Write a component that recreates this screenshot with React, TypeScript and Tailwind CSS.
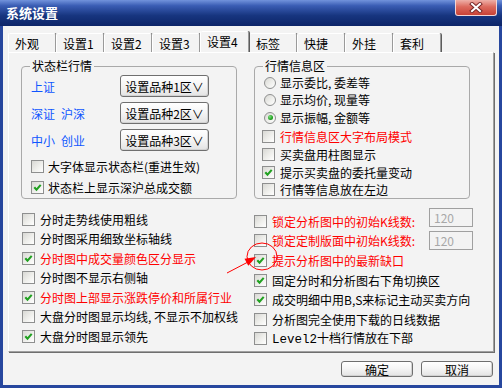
import React from "react";

function Box({ checked }: { checked?: boolean }) {
  return (
    <span className="flex h-[13px] w-[13px] shrink-0 items-center justify-center border border-[#8e8f8f] bg-[linear-gradient(135deg,#d8d8d4_0%,#efefec_55%,#ffffff_100%)]">
      {checked && (
        <svg width="11" height="11" viewBox="0 0 11 11">
          <path d="M2.3 5.2 L4.5 7.6 L8.7 2.9" fill="none" stroke="#21a121" strokeWidth="2.1" />
        </svg>
      )}
    </span>
  );
}

function CheckRow({
  checked,
  label,
  red,
  className = "",
  gap = "gap-[5px]",
}: {
  checked?: boolean;
  label: React.ReactNode;
  red?: boolean;
  className?: string;
  gap?: string;
}) {
  return (
    <div className={`flex h-[13px] items-center ${gap} ${className}`}>
      <Box checked={checked} />
      <span className={`whitespace-pre text-[12px] leading-[13px] ${red ? "text-[#ff0000]" : "text-black"}`}>{label}</span>
    </div>
  );
}

function Radio({ checked, label, className = "" }: { checked?: boolean; label: string; className?: string }) {
  return (
    <div className={`flex h-[13px] items-center gap-[4px] pl-[2px] ${className}`}>
      <span className="flex h-[12px] w-[12px] shrink-0 items-center justify-center rounded-full border border-[#8e8f8f] bg-[linear-gradient(135deg,#d8d8d4_0%,#efefec_55%,#ffffff_100%)]">
        {checked && <span className="h-[5px] w-[5px] rounded-full bg-[radial-gradient(circle_at_35%_35%,#7fdc7f_0%,#21a121_60%,#178017_100%)]" />}
      </span>
      <span className="whitespace-pre text-[12px] leading-[12px] text-black">{label}</span>
    </div>
  );
}

function Btn({ children, className = "" }: { children: React.ReactNode; className?: string }) {
  return (
    <button className={`flex items-center justify-center rounded-[3px] border border-[#6f6f6f] bg-[linear-gradient(180deg,#ffffff_0%,#f6f6f6_45%,#e3e3e3_100%)] text-[12px] leading-[13px] text-black shadow-[inset_-1px_-1px_0_#d2d2d2] ${className}`}>
      {children}
    </button>
  );
}

function Tab({ label, selected, w = "w-[48px]" }: { label: string; selected?: boolean; w?: string }) {
  return (
    <div
      className={`${w} flex items-center pl-[6px] rounded-t-[2px] border-l border-t border-r border-l-white border-t-white border-r-[#9a9a9a] shadow-[1px_0_0_#5c5c5c] bg-[#f3f3f3] text-[12px] leading-[13px] text-black ${
        selected ? "h-[21px] pb-[2px] relative z-10" : "h-[19px]"
      }`}
    >
      {label}
    </div>
  );
}

function Group({ title, children }: { title: string; children: React.ReactNode }) {
  return (
    <fieldset className="m-0 h-[140px] w-[216px] rounded-[4px] border border-[#a9a9a9] p-0">
      <legend className="ml-[8px] px-[2px] text-[12px] leading-[14px] text-black">{title}</legend>
      {children}
    </fieldset>
  );
}

export default function App() {
  const blue = "text-[#0f56ff]";
  return (
    <div className="relative flex h-[388px] w-[502px] flex-col overflow-hidden bg-[#27479e] font-['Noto_Sans_CJK_SC','Noto_Sans',sans-serif]">
      {/* title bar */}
      <div className="flex h-[26px] items-start bg-[linear-gradient(180deg,#7293dc_0%,#3a5db4_22%,#17357f_60%,#0c2468_100%)]">
        <div className="flex h-[26px] items-center pl-[6px] text-[13px] font-bold leading-[14px] text-white">系统设置</div>
        <div className="ml-auto mr-[5px] flex h-[16px] w-[42px] items-center justify-center rounded-b-[3px] border border-t-0 border-[#f2d6d6] bg-[linear-gradient(180deg,#eeb0a8_0%,#dc6a5e_45%,#c84236_100%)]">
          <svg width="14" height="11" viewBox="0 0 14 11">
            <path d="M3 2 L11 9 M11 2 L3 9" stroke="#7a2a2a" strokeWidth="4" strokeLinecap="square" />
            <path d="M3 2 L11 9 M11 2 L3 9" stroke="#ffffff" strokeWidth="2" strokeLinecap="square" />
          </svg>
        </div>
      </div>

      {/* body */}
      <div className="mx-[3px] mb-[3px] flex flex-1 flex-col bg-[#f3f3f3] pl-[5px] pt-[5px]">
        {/* tabs */}
        <div className="flex h-[21px] items-end">
          <Tab label="外观" />
          <Tab label="设置1" />
          <Tab label="设置2" />
          <Tab label="设置3" />
          <Tab label="设置4" selected w="w-[49px]" />
          <Tab label="标签" />
          <Tab label="快捷" />
          <Tab label="外挂" />
          <Tab label="套利" />
        </div>

        {/* panel */}
        <div className="flex h-[300px] w-[486px] border-l border-t border-r border-b border-l-white border-t-white border-r-[#a0a0a0] border-b-[#a0a0a0] shadow-[1px_1px_0_#6e6e6e] pl-[12px] pt-[6px]">
          {/* left column */}
          <div className="flex w-[233px] flex-col">
            <Group title="状态栏行情">
              <div className="flex flex-col pl-[9px] pt-[2px]">
                <div className="flex h-[22px] items-center">
                  <span className={`w-[89px] text-[12px] leading-[13px] ${blue}`}>上证</span>
                  <Btn className="h-[22px] w-[89px]">设置品种1区∨</Btn>
                </div>
                <div className="mt-[5px] flex h-[22px] items-center">
                  <span className={`flex w-[89px] gap-[6px] text-[12px] leading-[13px] ${blue}`}>
                    <span>深证</span>
                    <span>沪深</span>
                  </span>
                  <Btn className="h-[22px] w-[89px]">设置品种2区∨</Btn>
                </div>
                <div className="mt-[5px] flex h-[22px] items-center">
                  <span className={`flex w-[89px] gap-[6px] text-[12px] leading-[13px] ${blue}`}>
                    <span>中小</span>
                    <span>创业</span>
                  </span>
                  <Btn className="h-[22px] w-[89px]">设置品种3区∨</Btn>
                </div>
                <CheckRow className="mt-[9px]" gap="gap-[4px]" label="大字体显示状态栏(重进生效)" />
                <CheckRow className="mt-[8px]" gap="gap-[4px]" checked label="状态栏上显示深沪总成交额" />
              </div>
            </Group>
            <div className="flex flex-col pl-[1px]">
              <CheckRow className="mt-[14px]" label="分时走势线使用粗线" />
              <CheckRow className="mt-[6px]" label="分时图采用细致坐标轴线" />
              <CheckRow className="mt-[7px]" checked red label="分时图中成交量颜色区分显示" />
              <CheckRow className="mt-[6px]" label="分时图不显示右侧轴" />
              <CheckRow className="mt-[7px]" checked red label="分时图上部显示涨跌停价和所属行业" />
              <CheckRow className="mt-[6px]" label="大盘分时图显示均线, 不显示不加权线" />
              <CheckRow className="mt-[7px]" checked label="大盘分时图显示领先" />
            </div>
          </div>

          {/* right column */}
          <div className="flex flex-col">
            <Group title="行情信息区">
              <div className="flex flex-col pl-[7px]">
                <Radio className="mt-[3px]" label="显示委比, 委差等" />
                <Radio className="mt-[4px]" label="显示均价, 现量等" />
                <Radio className="mt-[5px]" checked label="显示振幅, 金额等" />
                <CheckRow className="mt-[6px]" red label="行情信息区大字布局模式" />
                <CheckRow className="mt-[5px]" label="买卖盘用柱图显示" />
                <CheckRow className="mt-[5px]" checked label="提示买卖盘的委托量变动" />
                <CheckRow className="mt-[4px]" label="行情等信息放在左边" />
              </div>
            </Group>
            <div className="flex flex-col">
              <div className="mt-[16px] flex h-[13px] items-center gap-[5px]">
                <Box />
                <span className="w-[152px] whitespace-nowrap text-[12px] leading-[13px] text-[#ff0000]">锁定分析图中的初始K线数:</span>
                <div className="mb-[8px] flex h-[19px] w-[44px] items-center border border-[#a0a0a0] bg-[#f3f3f3] pl-[4px] text-[12px] leading-[13px] text-[#a8a8a8]">120</div>
              </div>
              <div className="mt-[6px] flex h-[13px] items-center gap-[5px]">
                <Box />
                <span className="w-[152px] whitespace-nowrap text-[12px] leading-[13px] text-[#ff0000]">锁定定制版面中初始K线数:</span>
                <div className="flex h-[19px] w-[44px] items-center border border-[#a0a0a0] bg-[#f3f3f3] pl-[4px] text-[12px] leading-[13px] text-[#a8a8a8]">120</div>
              </div>
              <CheckRow className="mt-[7px]" checked red label="提示分析图中的最新缺口" />
              <CheckRow className="mt-[7px]" checked label="固定分时和分析图右下角切换区" />
              <CheckRow className="mt-[6px]" checked label="成交明细中用B,S来标记主动买卖方向" />
              <CheckRow className="mt-[7px]" label="分析图完全使用下载的日线数据" />
              <CheckRow
                className="mt-[6px]"
                label={
                  <>
                    <span className="font-['Liberation_Mono',monospace] text-[12.5px]">Level2</span>十档行情放在下部
                  </>
                }
              />
            </div>
          </div>
        </div>

        {/* buttons */}
        <div className="mt-[9px] flex justify-end gap-[8px] pr-[6px]">
          <Btn className="h-[16px] w-[72px]">确定</Btn>
          <Btn className="h-[16px] w-[72px]">取消</Btn>
        </div>
      </div>

      {/* annotation overlay */}
      <svg className="pointer-events-none absolute left-0 top-0" width="502" height="388" viewBox="0 0 502 388">
        <ellipse cx="262" cy="256.5" rx="15" ry="13.5" fill="none" stroke="#ff0000" strokeWidth="1" />
        <line x1="227" y1="273" x2="248" y2="262" stroke="#ff0000" strokeWidth="1" />
        <polygon points="256,257 248.3,265.8 244.5,258.8" fill="#ff0000" />
      </svg>
    </div>
  );
}
